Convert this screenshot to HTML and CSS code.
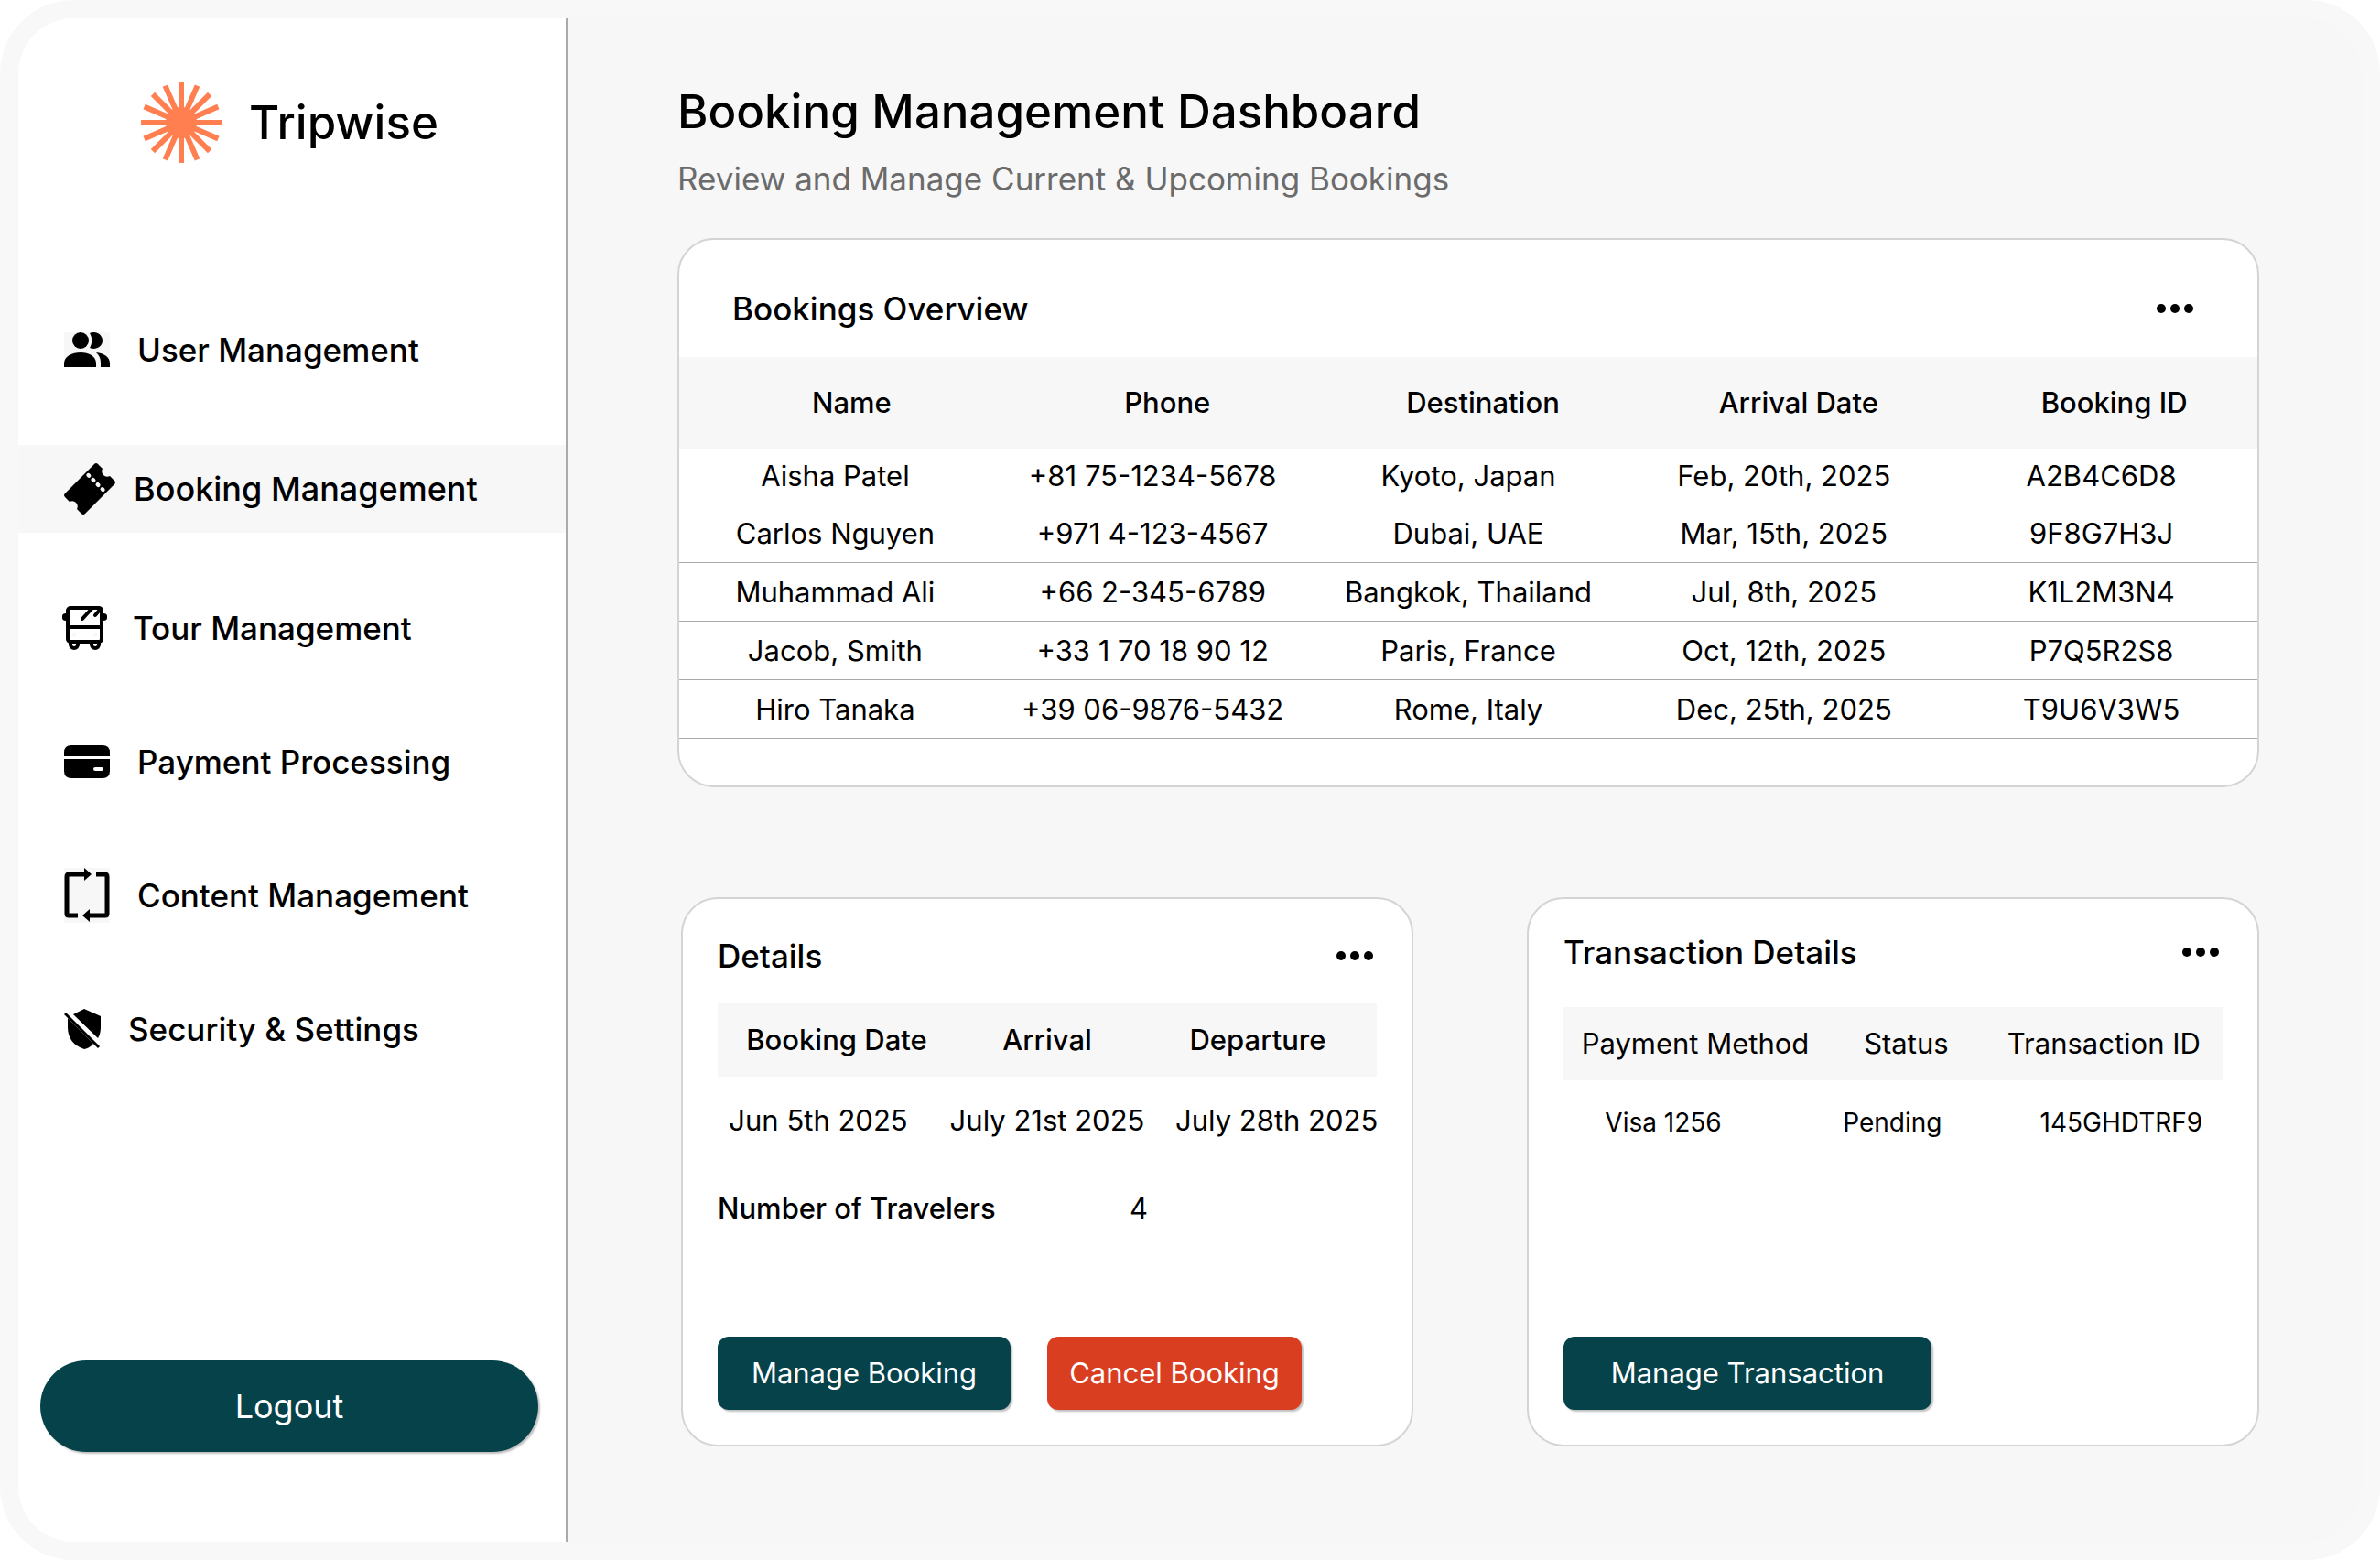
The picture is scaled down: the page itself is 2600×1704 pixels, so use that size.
FILE: index.html
```html
<!DOCTYPE html>
<html lang="en">
<head>
<meta charset="utf-8">
<title>Tripwise – Booking Management</title>
<link rel="stylesheet" href="styles.css">
</head>
<body>
<div class="frame">
  <div class="app">
    <aside class="sidebar">
      <a class="brand" href="#">
        <svg class="brand-mark" viewBox="-44 -44 88 88" aria-hidden="true">
          <circle r="14"/>
          <g>
            <path d="M-44 0H44M0 -44V44"/>
            <path d="M-44 0H44M0 -44V44" transform="rotate(23.5)"/>
            <path d="M-44 0H44M0 -44V44" transform="rotate(45)"/>
            <path d="M-44 0H44M0 -44V44" transform="rotate(66.5)"/>
          </g>
        </svg>
        <span>Tripwise</span>
      </a>
      <nav class="nav" aria-label="Main">
        <a class="nav-item" href="#">
          <svg class="icon-users" viewBox="0 0 50 38" aria-hidden="true">
            <rect width="50" height="38" fill="#f7f7f7"/>
            <circle cx="18" cy="9" r="9"/>
            <path d="M0 38V34C0 26 9 22 18 22S35 26 35 34V38Z"/>
            <path d="M28 1C34 -2 42 2 42 9S34 20 28 17C31 12 31 6 28 1Z"/>
            <path d="M35 22C44 23 50 27 50 34V38H40V34C40 29 39 26 35 22Z"/>
          </svg>
          <span>User Management</span>
        </a>
        <a class="nav-item active" href="#" aria-current="page">
          <svg class="icon-ticket" viewBox="0 0 56 56" aria-hidden="true">
            <path d="M1 33L33 1Q35 -1 37 1L42 6Q40 10 43 13T50 14L55 19Q57 21 55 23L23 55Q21 57 19 55L14 50Q16 46 13 43T6 42L1 37Q-1 35 1 33Z"/>
            <path d="M26.5 13L43 29.5" stroke="#f7f7f7" stroke-width="4.4" stroke-linecap="round" stroke-dasharray="1 6.2"/>
          </svg>
          <span>Booking Management</span>
        </a>
        <a class="nav-item tour" href="#">
          <svg class="icon-bus" viewBox="0 0 49 48" aria-hidden="true">
            <g fill="none" stroke="#000" stroke-width="4">
              <rect x="6" y="2" width="37" height="37" rx="3"/>
              <path d="M6 23H43"/>
              <path d="M9 40V42A4 4 0 0 0 17 42V40M32 40V42A4 4 0 0 0 40 42V40"/>
              <path d="M22 14L32 3M36 10L42 3" stroke-linecap="round"/>
            </g>
            <path d="M4 8V16Q0 16 0 13V11Q0 8 4 8ZM45 8V16Q49 16 49 13V11Q49 8 45 8Z"/>
            <circle cx="13" cy="31" r="2.5" fill="#f7f7f7"/>
            <circle cx="36" cy="31" r="2.5" fill="#f7f7f7"/>
          </svg>
          <span>Tour Management</span>
        </a>
        <a class="nav-item" href="#">
          <svg class="icon-card" viewBox="0 0 50 36" aria-hidden="true">
            <path d="M0 12V8Q0 0 8 0H42Q50 0 50 8V12Z"/>
            <path fill-rule="evenodd" d="M0 15H50V28Q50 36 42 36H8Q0 36 0 28ZM34 24A2 2 0 0 0 34 28H41A2 2 0 0 0 41 24Z"/>
          </svg>
          <span>Payment Processing</span>
        </a>
        <a class="nav-item" href="#">
          <svg class="icon-content" viewBox="0 0 50 60" aria-hidden="true">
            <rect width="50" height="60" fill="#f7f7f7"/>
            <path d="M15 52H5Q3 52 3 50V10Q3 7 5 7H23M35 7H45Q47 7 47 10V50Q47 52 45 52H27" fill="none" stroke="#000" stroke-width="5"/>
            <path d="M22 0L30 7L22 14ZM28 45L20 52L28 59Z"/>
          </svg>
          <span>Content Management</span>
        </a>
        <a class="nav-item" href="#">
          <svg class="icon-shield" viewBox="0 0 40 44" aria-hidden="true">
            <path d="M10 6L22 0L40 8V20Q40 27 37 32Z"/>
            <path d="M4 10L32 38Q28 43 22 44Q4 38 4 20Z"/>
            <path d="M1 5L38 42" stroke="#000" stroke-width="3"/>
          </svg>
          <span>Security &amp; Settings</span>
        </a>
      </nav>
      <button class="logout" type="button">Logout</button>
    </aside>

    <main class="main">
      <h1>Booking Management Dashboard</h1>
      <p class="subtitle">Review and Manage Current &amp; Upcoming Bookings</p>

      <section class="card overview">
        <header class="card-head">
          <h2>Bookings Overview</h2>
          <button class="more" type="button" aria-label="More options"><svg viewBox="0 0 40 10"><circle cx="5" cy="5" r="5"/><circle cx="20" cy="5" r="5"/><circle cx="35" cy="5" r="5"/></svg></button>
        </header>
        <table class="bookings">
          <thead>
            <tr><th>Name</th><th>Phone</th><th>Destination</th><th>Arrival Date</th><th>Booking ID</th></tr>
          </thead>
          <tbody>
            <tr><td>Aisha Patel</td><td>+81 75-1234-5678</td><td>Kyoto, Japan</td><td>Feb, 20th, 2025</td><td>A2B4C6D8</td></tr>
            <tr><td>Carlos Nguyen</td><td>+971 4-123-4567</td><td>Dubai, UAE</td><td>Mar, 15th, 2025</td><td>9F8G7H3J</td></tr>
            <tr><td>Muhammad Ali</td><td>+66 2-345-6789</td><td>Bangkok, Thailand</td><td>Jul, 8th, 2025</td><td>K1L2M3N4</td></tr>
            <tr><td>Jacob, Smith</td><td>+33 1 70 18 90 12</td><td>Paris, France</td><td>Oct, 12th, 2025</td><td>P7Q5R2S8</td></tr>
            <tr><td>Hiro Tanaka</td><td>+39 06-9876-5432</td><td>Rome, Italy</td><td>Dec, 25th, 2025</td><td>T9U6V3W5</td></tr>
          </tbody>
        </table>
      </section>

      <div class="panels">
        <section class="card panel details">
          <header class="card-head">
            <h2>Details</h2>
            <button class="more" type="button" aria-label="More options"><svg viewBox="0 0 40 10"><circle cx="5" cy="5" r="5"/><circle cx="20" cy="5" r="5"/><circle cx="35" cy="5" r="5"/></svg></button>
          </header>
          <table class="dates">
            <thead><tr><th>Booking Date</th><th>Arrival</th><th>Departure</th></tr></thead>
            <tbody><tr><td>Jun 5th 2025</td><td>July 21st 2025</td><td>July 28th 2025</td></tr></tbody>
          </table>
          <dl class="travelers"><dt>Number of Travelers</dt><dd>4</dd></dl>
          <div class="actions">
            <button class="btn" type="button">Manage Booking</button>
            <button class="btn danger" type="button">Cancel Booking</button>
          </div>
        </section>

        <section class="card panel transaction">
          <header class="card-head">
            <h2>Transaction Details</h2>
            <button class="more" type="button" aria-label="More options"><svg viewBox="0 0 40 10"><circle cx="5" cy="5" r="5"/><circle cx="20" cy="5" r="5"/><circle cx="35" cy="5" r="5"/></svg></button>
          </header>
          <table class="payments">
            <thead><tr><th>Payment Method</th><th>Status</th><th>Transaction ID</th></tr></thead>
            <tbody><tr><td>Visa 1256</td><td>Pending</td><td>145GHDTRF9</td></tr></tbody>
          </table>
          <div class="actions">
            <button class="btn wide" type="button">Manage Transaction</button>
          </div>
        </section>
      </div>
    </main>
  </div>
</div>
</body>
</html>
```
FILE: styles.css
```css
* { box-sizing: border-box; }

body {
  margin: 0;
  background: #fff;
  color: #000;
  font-family: Inter, "Liberation Sans", sans-serif;
  font-size: 31px;
  line-height: 40px;
}

h1, h2, p, dl, dd { margin: 0; }
h1, h2 { font-weight: 500; }
a { color: inherit; text-decoration: none; }
button { border: 0; font: inherit; cursor: pointer; }

.frame {
  display: flex;
  min-height: 100vh;
  padding: 20px;
  border-radius: 80px;
  background: #f8f8f8;
}

.app {
  display: flex;
  flex: 1;
  border-radius: 60px;
  background: #f7f7f7;
  overflow: hidden;
}

/* Sidebar */
.sidebar {
  display: flex;
  flex-direction: column;
  flex: none;
  width: 600px;
  border-right: 2px solid #aaa;
  background: #fff;
}

.brand {
  display: flex;
  align-items: center;
  gap: 30px;
  padding: 70px 0 0 134px;
  font-size: 51px;
  line-height: 64px;
  font-weight: 500;
}

.brand-mark {
  width: 88px;
  height: 88px;
  fill: #ff7f50;
  stroke: #ff7f50;
  stroke-width: 6px;
}

.nav {
  display: flex;
  flex-direction: column;
  gap: 50px;
  margin-top: 156px;
  font-size: 35px;
  line-height: 44px;
  font-weight: 500;
}

.nav-item {
  display: flex;
  align-items: center;
  gap: 30px;
  height: 96px;
  padding-left: 50px;
}

.nav-item.active {
  gap: 20px;
  margin: 6px 0;
  background: #f7f7f7;
  font-size: 36px;
}

.nav-item.tour {
  gap: 28px;
  padding-left: 48px;
}

.nav svg { flex: none; }
.icon-users { width: 50px; height: 38px; }
.icon-ticket { width: 56px; height: 56px; }
.icon-bus { width: 49px; height: 48px; }
.icon-card { width: 50px; height: 36px; }
.icon-content { width: 50px; height: 60px; }
.icon-shield { width: 40px; height: 44px; }

.logout {
  height: 100px;
  margin: auto 30px 98px 24px;
  border-radius: 50px;
  background: #05424a;
  box-shadow: 2px 2px 2px rgba(0, 0, 0, .25);
  color: #fff;
  font-size: 36px;
}

/* Main column */
.main {
  flex: 1;
  padding: 70px 112px 103px 120px;
}

h1 {
  font-size: 51px;
  line-height: 64px;
}

.subtitle {
  margin: 19px 0 43px;
  color: #6b6b6b;
  font-size: 35px;
  line-height: 44px;
}

.card {
  min-height: 600px;
  border: 2px solid #d4d4d4;
  border-radius: 40px;
  background: #fff;
}

.card-head {
  display: flex;
  align-items: center;
  justify-content: space-between;
}

.card-head h2 {
  font-size: 35px;
  line-height: 44px;
}

.more {
  display: flex;
  padding: 0;
  background: none;
}

.more svg { width: 40px; height: 10px; }

table {
  width: 100%;
  border-collapse: separate;
  border-spacing: 0;
  table-layout: fixed;
  white-space: nowrap;
}

th, td {
  padding: 0;
  text-align: center;
  font-weight: 400;
}

thead { background: #f7f7f7; }

.overview .card-head { padding: 53px 70px 31px 58px; }

.bookings th {
  height: 100px;
  padding-left: 32px;
  font-weight: 500;
}

.bookings td {
  height: 64px;
  border-bottom: 1px solid #aaa;
}

.bookings tbody tr:first-child td { height: 61px; }
.bookings td:first-child { padding-right: 4px; }
.bookings td:last-child { padding-left: 4px; }

/* Lower panels */
.panels {
  display: grid;
  grid-template-columns: 1fr 1fr;
  gap: 124px;
  margin-top: 120px;
  padding-left: 4px;
}

.panel {
  display: flex;
  flex-direction: column;
  padding: 0 38px 38px;
}

.panel th { height: 80px; }
.panel td { height: 96px; }

.details .card-head { padding: 40px 4px 30px 0; }

.dates th { font-weight: 500; }
.dates th:first-child { padding-left: 20px; }
.dates th:last-child { padding-right: 20px; }
.dates td:first-child { padding-right: 20px; }
.dates td:last-child { padding-left: 20px; }

.travelers {
  display: grid;
  grid-template-columns: 450px 1fr;
  margin-top: 28px;
}

.travelers dt { font-weight: 500; }

.transaction .card-head { padding: 36px 4px 38px 0; }
.payments th:nth-child(1) { width: 40%; }
.payments th:nth-child(2) { width: 24%; }
.payments td { height: 92px; font-size: 28px; }
.payments td:nth-child(1) { padding-right: 70px; }
.payments td:nth-child(2) { padding-right: 30px; }
.payments td:nth-child(3) { padding-left: 38px; }

.actions {
  display: flex;
  gap: 40px;
  margin-top: auto;
}

.btn {
  width: 320px;
  height: 80px;
  padding: 0;
  border-radius: 12px;
  background: #05424a;
  box-shadow: 2px 2px 2px rgba(0, 0, 0, .25);
  color: #fff;
}

.btn.danger {
  width: 278px;
  background: #da3e21;
}

.btn.wide { width: 402px; }
```
